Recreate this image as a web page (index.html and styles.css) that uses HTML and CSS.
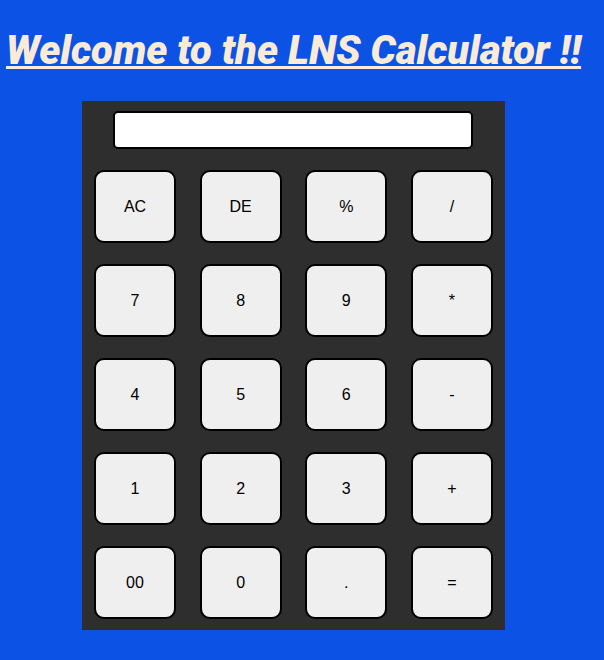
FILE: index.html
```html
<!DOCTYPE html>
<html>
<head>
<meta charset="utf-8">
<link rel="stylesheet" href="styles.css">
</head>
<body>
<h1 class="title">Welcome to the LNS Calculator !!</h1>
<div class="calc">
  <div class="display"></div>
  <div class="keys">
    <button class="key">AC</button>
    <button class="key">DE</button>
    <button class="key">%</button>
    <button class="key">/</button>
    <button class="key">7</button>
    <button class="key">8</button>
    <button class="key">9</button>
    <button class="key">*</button>
    <button class="key">4</button>
    <button class="key">5</button>
    <button class="key">6</button>
    <button class="key">-</button>
    <button class="key">1</button>
    <button class="key">2</button>
    <button class="key">3</button>
    <button class="key">+</button>
    <button class="key">00</button>
    <button class="key">0</button>
    <button class="key">.</button>
    <button class="key">=</button>
  </div>
</div>
</body>
</html>
```
FILE: styles.css
```css
html, body {
  margin: 0;
  padding: 0;
  background: #0c52e5;
}
body {
  padding: 25px 0 0 6px;
  font-family: "Liberation Sans", Arial, sans-serif;
}
.title {
  margin: 0 0 24px 0;
  font-family: Roboto, sans-serif;
  font-weight: 900;
  font-style: italic;
  font-size: 40px;
  line-height: 52px;
  color: #faebd7;
  text-decoration: underline;
  text-decoration-thickness: 3px;
}
.calc {
  width: 423px;
  height: 529px;
  box-sizing: border-box;
  margin-left: 76px;
  background: #2e2e2e;
  padding: 10px 12px 11px 12px;
}
.display {
  width: 360px;
  height: 38px;
  box-sizing: border-box;
  margin: 0 auto 21px auto;
  position: relative;
  left: -1px;
  background: #fff;
  border: 2px solid #000;
  border-radius: 5px;
}
.keys {
  display: grid;
  grid-template-columns: repeat(4, 82px);
  grid-auto-rows: 73px;
  row-gap: 21px;
  justify-content: space-between;
}
.key {
  box-sizing: border-box;
  background: #efefef;
  border: 2px solid #000;
  border-radius: 10px;
  font-family: "Liberation Sans", Arial, sans-serif;
  font-size: 16px;
  color: #000;
  padding: 0;
}
```
